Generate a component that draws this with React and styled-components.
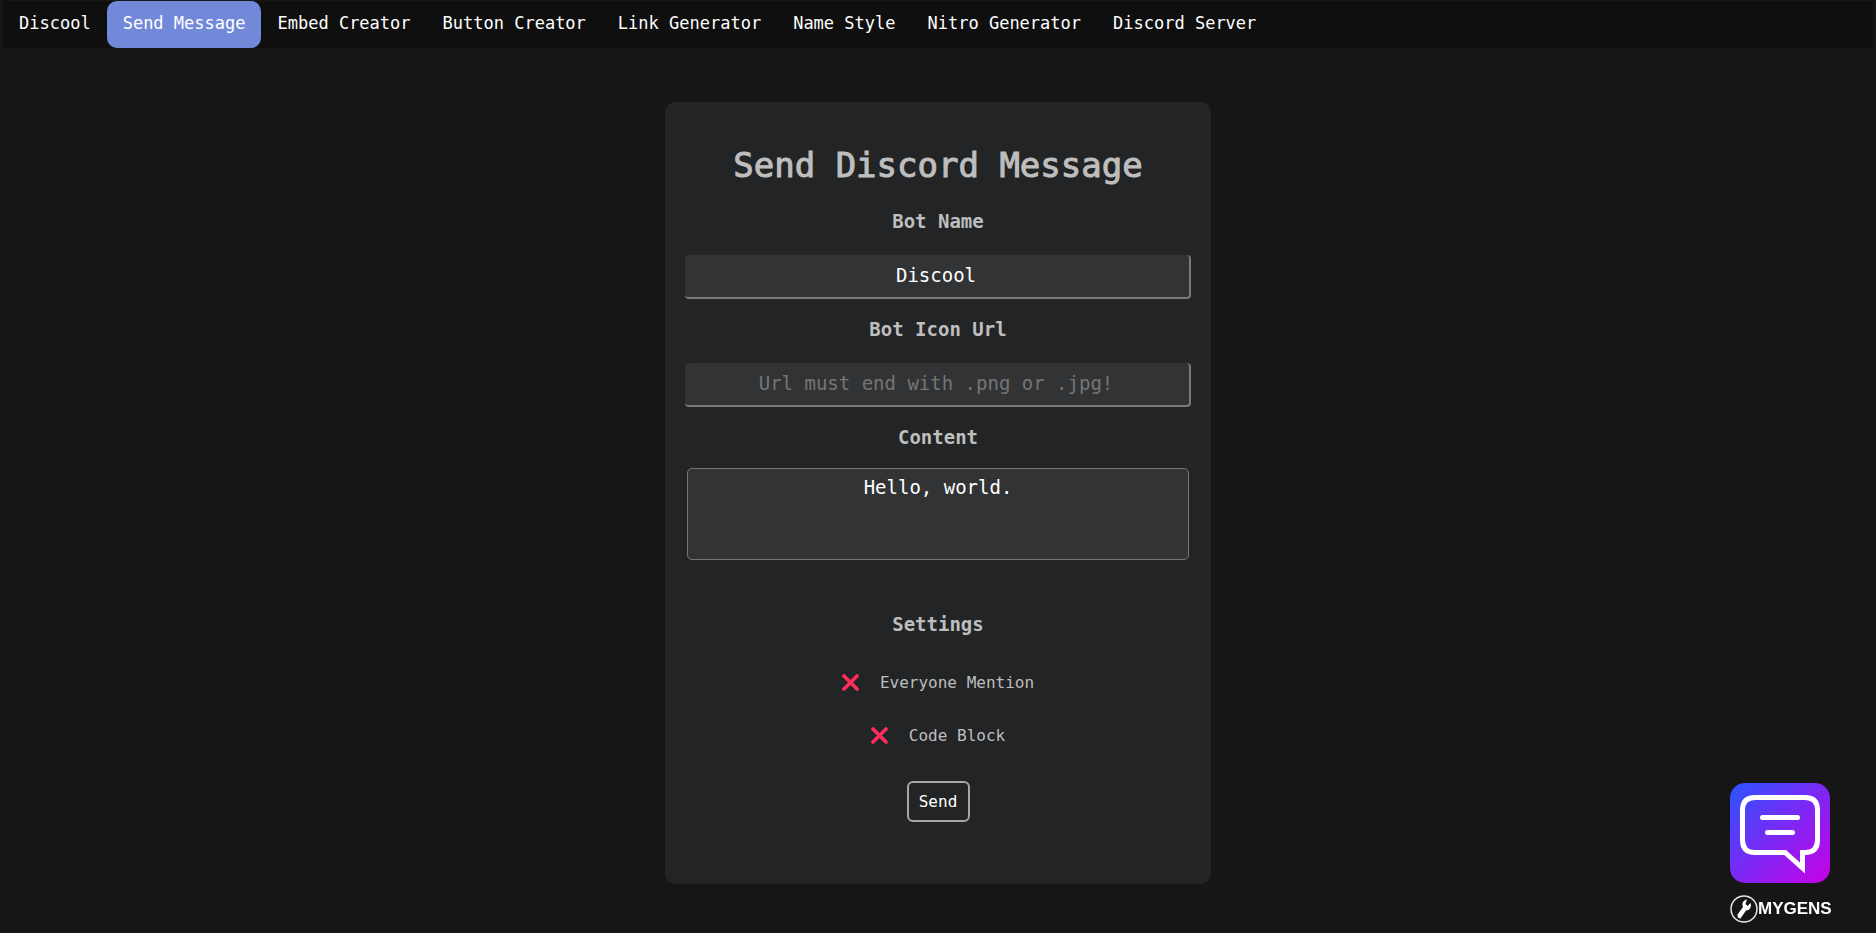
import React from "react";
import styled, { createGlobalStyle } from "styled-components";

const GlobalStyle = createGlobalStyle`
  * { box-sizing: border-box; }
  html { background: #161616; }
  body {
    margin: 0;
    color: #bebebe;
    font-family: "DejaVu Sans Mono", monospace;
    font-size: 16px;
  }
  button, input, textarea { font-family: inherit; }
`;

const Nav = styled.nav`
  display: flex;
  height: 47px;
  margin: 1px 3px 0;
  background: #0f0f0f;
`;

const NavLink = styled.a`
  padding: 11px 16px 0;
  border-radius: 10px;
  background: ${({ $active }) => ($active ? "#7289da" : "transparent")};
  color: #ffffff;
  font-size: 17px;
  line-height: 22px;
  text-decoration: none;
  white-space: nowrap;
`;

const Card = styled.form`
  display: flex;
  flex-direction: column;
  align-items: center;
  width: 546px;
  max-width: 100%;
  margin: 54px auto 48px;
  padding: 42px 20px 62px;
  border-radius: 10px;
  background: #232426;
`;

const Title = styled.h1`
  margin: 0;
  font-size: 34px;
  font-weight: normal;
  line-height: 42px;
  -webkit-text-stroke: 1px currentColor;
`;

const Label = styled.label`
  margin-top: 23px;
  font-size: 19px;
  font-weight: bold;
  line-height: 24px;
`;

const Heading = styled.h2`
  margin: 52px 0 20px;
  font-size: 19px;
  line-height: 24px;
`;

const TextInput = styled.input`
  width: 100%;
  height: 44px;
  margin: 22px 0 -5px;
  padding: 0 2px 2px 0;
  border: 0 solid #7a7a7a;
  border-width: 0 2px 2px 0;
  border-radius: 4px;
  outline: none;
  background: #323335;
  color: #ffffff;
  font-size: 19px;
  text-align: center;
  &::placeholder { color: #757575; }
`;

const TextArea = styled.textarea`
  width: 502px;
  max-width: 100%;
  height: 92px;
  margin: 19px 0 0;
  padding: 6px 4px;
  border: 1px solid #757575;
  border-radius: 5px;
  outline: none;
  resize: none;
  background: #323335;
  color: #ffffff;
  font-size: 19px;
  line-height: 24px;
  text-align: center;
`;

const Option = styled.label`
  display: flex;
  align-items: center;
  gap: 21px;
  height: 53px;
`;

const Check = styled.input`
  position: absolute;
  opacity: 0;
`;

const Cross = styled.svg`
  width: 17px;
  height: 17px;
`;

const SendButton = styled.button`
  width: 63px;
  height: 41px;
  margin-top: 19px;
  padding: 0;
  border: 2px solid #a6a6a6;
  border-radius: 6px;
  background: transparent;
  color: #ffffff;
  font-size: 16px;
`;

const Brand = styled.a`
  position: fixed;
  right: 46px;
  bottom: 10px;
  width: 100px;
  color: #ffffff;
  text-decoration: none;
`;

const Bubble = styled.svg`
  display: block;
  width: 100px;
  height: 100px;
`;

const BrandRow = styled.span`
  display: flex;
  align-items: center;
  height: 28px;
  margin-top: 12px;
  font-family: "Liberation Sans", sans-serif;
  font-size: 17px;
  font-weight: bold;
`;

const Wrench = styled.svg`
  flex: none;
  width: 28px;
  height: 28px;
`;

const links = [
  "Discool",
  "Send Message",
  "Embed Creator",
  "Button Creator",
  "Link Generator",
  "Name Style",
  "Nitro Generator",
  "Discord Server",
];

function Setting({ children }) {
  return (
    <Option>
      <Check type="checkbox" />
      <Cross viewBox="0 0 17 17" aria-hidden="true">
        <path d="M2 2 15 15M15 2 2 15" stroke="#ff2d5b" strokeWidth="3.6" strokeLinecap="round" />
      </Cross>
      {children}
    </Option>
  );
}

export default function App() {
  return (
    <>
      <GlobalStyle />
      <Nav>
        {links.map((name) => (
          <NavLink key={name} href="#" $active={name === "Send Message"}>
            {name}
          </NavLink>
        ))}
      </Nav>
      <Card onSubmit={(event) => event.preventDefault()}>
        <Title>Send Discord Message</Title>
        <Label htmlFor="bot-name">Bot Name</Label>
        <TextInput id="bot-name" defaultValue="Discool" />
        <Label htmlFor="bot-icon">Bot Icon Url</Label>
        <TextInput id="bot-icon" placeholder="Url must end with .png or .jpg!" />
        <Label htmlFor="content">Content</Label>
        <TextArea id="content" defaultValue="Hello, world." />
        <Heading>Settings</Heading>
        <Setting>Everyone Mention</Setting>
        <Setting>Code Block</Setting>
        <SendButton type="submit">Send</SendButton>
      </Card>
      <Brand href="#">
        <Bubble viewBox="0 0 100 100" aria-hidden="true">
          <defs>
            <linearGradient id="bubble" x1="0" y1="0" x2="1" y2="1">
              <stop offset="0" stopColor="#2b55ff" />
              <stop offset="0.5" stopColor="#7c28f4" />
              <stop offset="1" stopColor="#c800e6" />
            </linearGradient>
          </defs>
          <rect width="100" height="100" rx="15" fill="url(#bubble)" />
          <path
            d="M25 14.5H75Q87.500 14.500 87.500 27V57Q87.500 69.500 75 69.500H72.500V85L55 69.500H25Q12.500 69.500 12.500 57V27Q12.500 14.500 25 14.500Z"
            fill="none"
            stroke="#fff"
            strokeWidth="5"
          />
          <path d="M32.500 34.500H67.500M37.500 49.500H62.500" stroke="#fff" strokeWidth="5" strokeLinecap="round" />
        </Bubble>
        <BrandRow>
          <Wrench viewBox="0 0 28 28" aria-hidden="true">
            <circle cx="14" cy="14" r="13" fill="none" stroke="#e6e6e6" strokeWidth="1.5" />
            <path
              d="M17 4.500C13 5 11.500 8.500 13 12L7.500 19.500Q7 23.500 10.500 23.500L16 15.500C19.500 15.500 22 12 20.500 8L17.500 11L15.500 9Z"
              fill="#fff"
            />
          </Wrench>
          MYGENS
        </BrandRow>
      </Brand>
    </>
  );
}
